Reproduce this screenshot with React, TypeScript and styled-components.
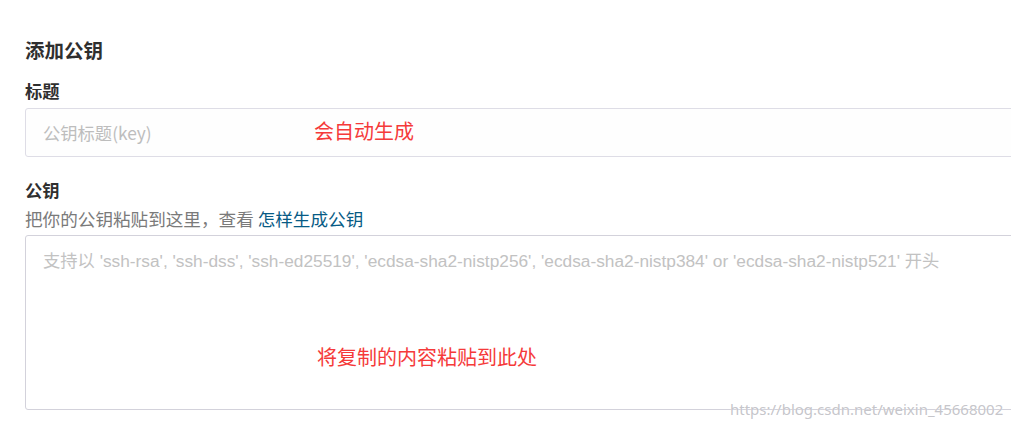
import React from "react";
import styled, { createGlobalStyle } from "styled-components";

const Global = createGlobalStyle`
  html, body { margin: 0; padding: 0; background: #fff; overflow: hidden; }
  body { font-family: "Microsoft YaHei", "Noto Sans CJK SC", "Noto Sans", sans-serif; }
  * { box-sizing: border-box; }
`;

const Page = styled.div`
  position: relative;
  width: 1011px;
  height: 429px;
  padding: 36px 0 0 25px;
  display: flex;
  flex-direction: column;
`;

const Heading = styled.h2`
  margin: 0 0 15px;
  font-size: 19.5px;
  line-height: 28px;
  font-weight: 700;
  color: #2f2f2f;
`;

const Label = styled.label<{ $top?: number }>`
  display: block;
  margin-top: ${(p) => p.$top ?? 0}px;
  font-size: 17.3px;
  line-height: 24px;
  font-weight: 700;
  color: #2f2f2f;
`;

const Hint = styled.div`
  margin-top: 5px;
  font-size: 17.6px;
  line-height: 24px;
  color: #7a7a7a;
`;

const Link = styled.a`
  color: #075b85;
  text-decoration: none;
`;

const Field = styled.div<{ $top: number }>`
  position: relative;
  margin-top: ${(p) => p.$top}px;
  width: 1040px;
`;

const TextInput = styled.input`
  display: block;
  width: 100%;
  height: 49px;
  border: 1px solid #dedde6;
  border-radius: 3px;
  padding: 0 17px;
  font-family: inherit;
  font-size: 17.3px;
  background: #fefefe;
  outline: none;
  &::placeholder { color: #bdbdbd; }
`;

const TextArea = styled.textarea`
  display: block;
  width: 100%;
  height: 175px;
  border: 1px solid #d3d2db;
  border-radius: 3px;
  padding: 13px 17px;
  font-family: "Liberation Sans", "Noto Sans CJK SC", sans-serif;
  font-size: 17.3px;
  line-height: 24px;
  resize: none;
  background: #fff;
  outline: none;
  &::placeholder { color: #c2c2c2; }
`;

const Note = styled.span<{ $x: number; $y: number }>`
  position: absolute;
  left: ${(p) => p.$x}px;
  top: ${(p) => p.$y}px;
  font-size: 20px;
  line-height: 26px;
  color: #f53a3a;
  pointer-events: none;
`;

const Watermark = styled.span`
  position: absolute;
  left: 730px;
  top: 400px;
  font-family: "Microsoft YaHei", "Noto Sans", sans-serif;
  font-size: 15px;
  line-height: 18px;
  color: rgba(190, 190, 196, 0.9);
  text-shadow: 0 0 1px #fff;
`;

export default function App() {
  return (
    <>
      <Global />
      <Page>
        <Heading>添加公钥</Heading>
        <Label>标题</Label>
        <Field $top={5}>
          <TextInput placeholder="公钥标题(key)" />
          <Note $x={289} $y={10}>会自动生成</Note>
        </Field>
        <Label $top={21}>公钥</Label>
        <Hint>
          把你的公钥粘贴到这里，查看 <Link href="#">怎样生成公钥</Link>
        </Hint>
        <Field $top={4}>
          <TextArea placeholder="支持以 'ssh-rsa', 'ssh-dss', 'ssh-ed25519', 'ecdsa-sha2-nistp256', 'ecdsa-sha2-nistp384' or 'ecdsa-sha2-nistp521' 开头" />
          <Note $x={292} $y={109}>将复制的内容粘贴到此处</Note>
        </Field>
        <Watermark>https://blog.csdn.net/weixin_45668002</Watermark>
      </Page>
    </>
  );
}
